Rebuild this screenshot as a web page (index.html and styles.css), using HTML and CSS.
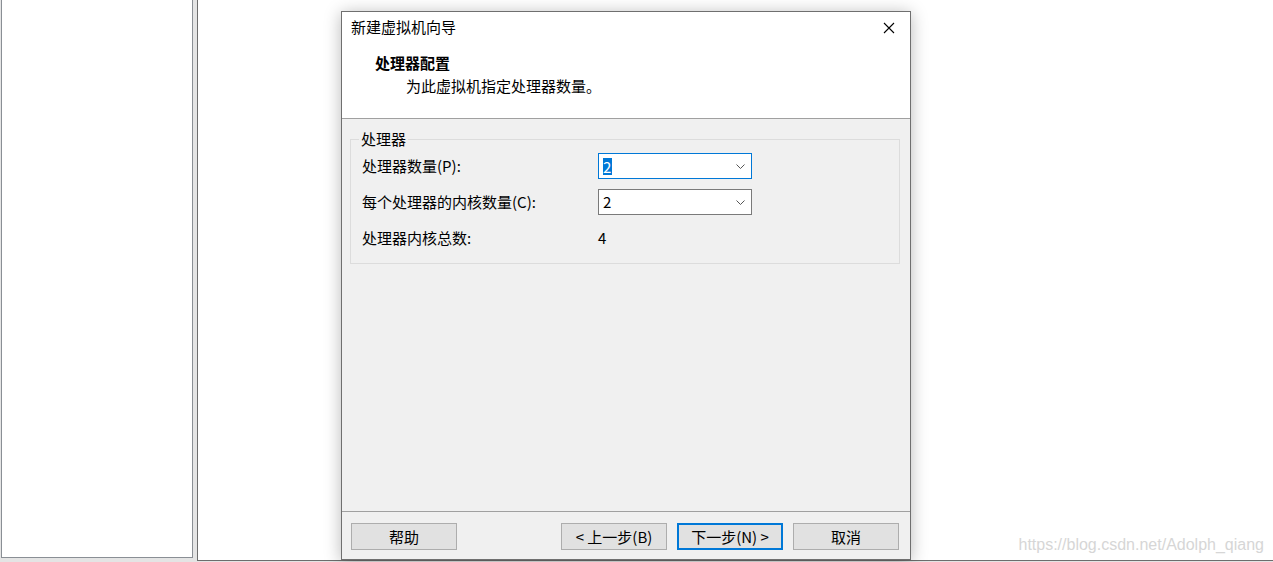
FILE: index.html
```html
<!DOCTYPE html>
<html lang="zh-CN">
<head>
    <meta charset="UTF-8">
    <title>新建虚拟机向导</title>
    <link rel="stylesheet" href="styles.css">
</head>
<body>
    <div class="desktop">
        <div class="pane-left"></div>
        <div class="pane-main"></div>
    </div>

    <div class="dialog">
        <div class="dlg-head">
            <div class="titlebar">
                <span class="title">新建虚拟机向导</span>
                <span class="close">
                    <svg width="12" height="12" viewBox="0 0 12 12">
                        <path d="M1 1 L11 11 M11 1 L1 11" stroke="#000" stroke-width="1.1" fill="none"/>
                    </svg>
                </span>
            </div>
            <div class="page-title">处理器配置</div>
            <div class="page-desc">为此虚拟机指定处理器数量。</div>
        </div>

        <div class="dlg-body">
            <fieldset class="group">
                <legend>处理器</legend>
                <div class="form">
                    <label>处理器数量(P):</label>
                    <div class="combo focused">
                        <span class="sel">2</span>
                        <svg class="chev" width="9" height="5" viewBox="0 0 9 5">
                            <path d="M0.5 0.5 L4.5 4.5 L8.5 0.5" stroke="#555" fill="none"/>
                        </svg>
                    </div>

                    <label>每个处理器的内核数量(C):</label>
                    <div class="combo">
                        <span>2</span>
                        <svg class="chev" width="9" height="5" viewBox="0 0 9 5">
                            <path d="M0.5 0.5 L4.5 4.5 L8.5 0.5" stroke="#555" fill="none"/>
                        </svg>
                    </div>

                    <label>处理器内核总数:</label>
                    <div class="value">4</div>
                </div>
            </fieldset>
        </div>

        <div class="dlg-foot">
            <button class="btn">帮助</button>
            <div class="spacer"></div>
            <button class="btn">&lt; 上一步(B)</button>
            <button class="btn default">下一步(N) &gt;</button>
            <button class="btn">取消</button>
        </div>
    </div>

    <div class="watermark">https://blog.csdn.net/Adolph_qiang</div>
</body>
</html>
```

FILE: styles.css
```css
html, body {
    margin: 0;
    height: 100%;
    overflow: hidden;
}
body {
    background: #e4e4e4;
    font-family: "Noto Sans CJK SC", "Liberation Sans", sans-serif;
    font-size: 15px;
    color: #000;
}
.desktop {
    display: flex;
    margin-top: -3px;
}
.pane-left {
    margin-left: 1px;
    width: 190px;
    height: 559px;
    background: #fff;
    border: 1px solid #8a8f95;
}
.pane-main {
    margin-left: 4px;
    flex: 1;
    margin-right: -20px;
    height: 562px;
    background: #fff;
    border: 1px solid #6d6d6d;
}

/* wizard window */
.dialog {
    position: absolute;
    left: 341px;
    top: 11px;
    width: 568px;
    height: 547px;
    border: 1px solid #6f6f6f;
    background: #f0f0f0;
    box-shadow: 0 2px 16px rgba(0,0,0,0.28);
    display: flex;
    flex-direction: column;
}
.dlg-head {
    background: #fff;
    height: 106px;
    border-bottom: 1px solid #a0a0a0;
}
.titlebar {
    display: flex;
    align-items: center;
    height: 29px;
    padding-left: 9px;
}
.title {
    flex: 1;
    line-height: 20px;
}
.close {
    width: 40px;
    display: flex;
    justify-content: center;
    margin-right: 1px;
    padding-top: 3px;
}
.page-title {
    margin: 12px 0 0 33px;
    font-weight: bold;
    line-height: 20px;
}
.page-desc {
    margin: 3px 0 0 64px;
    line-height: 20px;
}

.dlg-body {
    flex: 1;
    padding: 10px 10px 0 8px;
}
.group {
    margin: 0;
    padding: 4px 0 12px 11px;
    border: 1px solid #dcdcdc;
    min-width: 0;
}
.group legend {
    padding: 0 2px;
    margin-left: -3px;
    line-height: 20px;
}
.form {
    display: grid;
    grid-template-columns: 236px 154px;
    grid-auto-rows: 26px;
    row-gap: 10px;
    align-items: center;
}
.form label {
    line-height: 20px;
}
.combo {
    height: 24px;
    border: 1px solid #7a7a7a;
    background: #fff;
    display: flex;
    align-items: center;
    padding-left: 4px;
    line-height: 20px;
}
.combo.focused {
    border-color: #0078d7;
}
.combo span {
    flex: 1;
}
.combo .sel {
    flex: none;
    background: #0078d7;
    color: #fff;
    padding: 0 1px 0 0;
    line-height: 17px;
    margin-right: auto;
}
.chev {
    margin-right: 6px;
}
.value {
    line-height: 20px;
}

.dlg-foot {
    height: 48px;
    border-top: 1px solid #a0a0a0;
    display: flex;
    align-items: flex-start;
    gap: 10px;
    padding: 11px 11px 0 9px;
    box-sizing: border-box;
}
.spacer {
    flex: 1;
}
.btn {
    width: 106px;
    height: 27px;
    background: #e1e1e1;
    border: 1px solid #adadad;
    font-family: inherit;
    font-size: 15px;
    padding: 0;
    color: #000;
    line-height: 20px;
}
.btn.default {
    border: 2px solid #0078d7;
}

.watermark {
    position: absolute;
    right: 9px;
    bottom: 8px;
    font-family: "Liberation Sans", Arial, sans-serif;
    font-size: 16px;
    color: #d6d6d6;
}
```
